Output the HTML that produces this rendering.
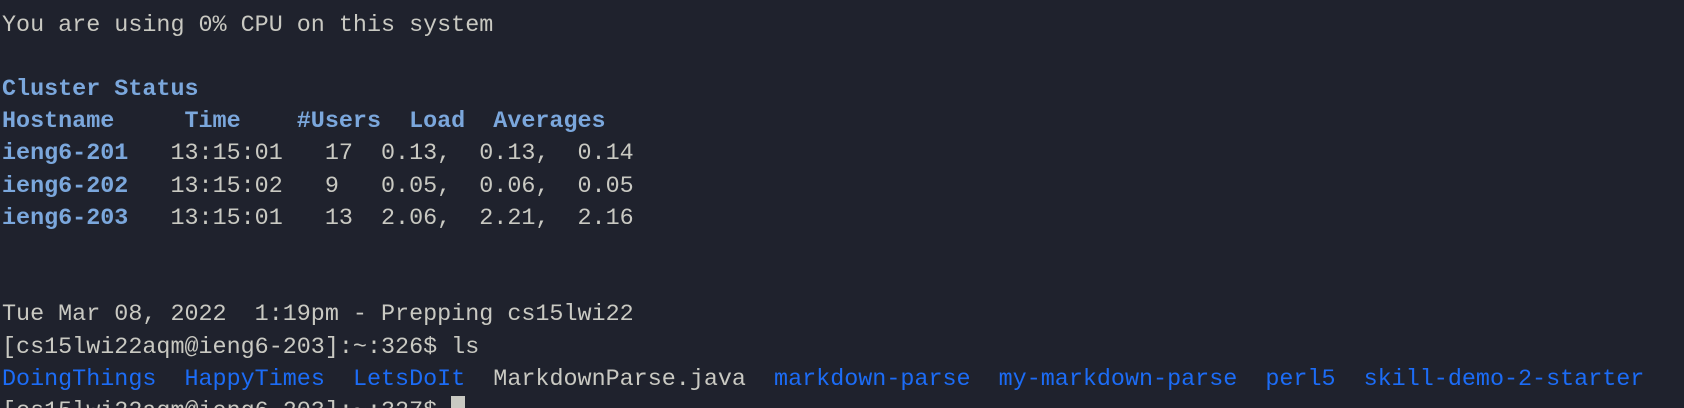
<!DOCTYPE html>
<html><head><style>
html,body{margin:0;padding:0;background:#1f222d;width:1684px;height:408px;overflow:hidden}
pre{margin:0;padding:9.5px 0 0 2px;font-family:"Liberation Mono",monospace;font-size:23.4px;line-height:32.2px;color:#c9c9c2;white-space:pre}
.h{color:#7ba7dc;font-weight:bold}
.b{color:#1c6cf6}
.c{display:inline-block;width:14px;height:26px;background:#c9c9c2;vertical-align:-5px}
</style></head><body><pre>You are using 0% CPU on this system

<span class="h">Cluster Status</span>
<span class="h">Hostname     Time    #Users  Load  Averages</span>
<span class="h">ieng6-201</span>   13:15:01   17  0.13,  0.13,  0.14
<span class="h">ieng6-202</span>   13:15:02   9   0.05,  0.06,  0.05
<span class="h">ieng6-203</span>   13:15:01   13  2.06,  2.21,  2.16


Tue Mar 08, 2022  1:19pm - Prepping cs15lwi22
[cs15lwi22aqm@ieng6-203]:~:326$ ls
<span class="b">DoingThings</span>  <span class="b">HappyTimes</span>  <span class="b">LetsDoIt</span>  MarkdownParse.java  <span class="b">markdown-parse</span>  <span class="b">my-markdown-parse</span>  <span class="b">perl5</span>  <span class="b">skill-demo-2-starter</span>
[cs15lwi22aqm@ieng6-203]:~:327$ <span class="c"></span></pre></body></html>
